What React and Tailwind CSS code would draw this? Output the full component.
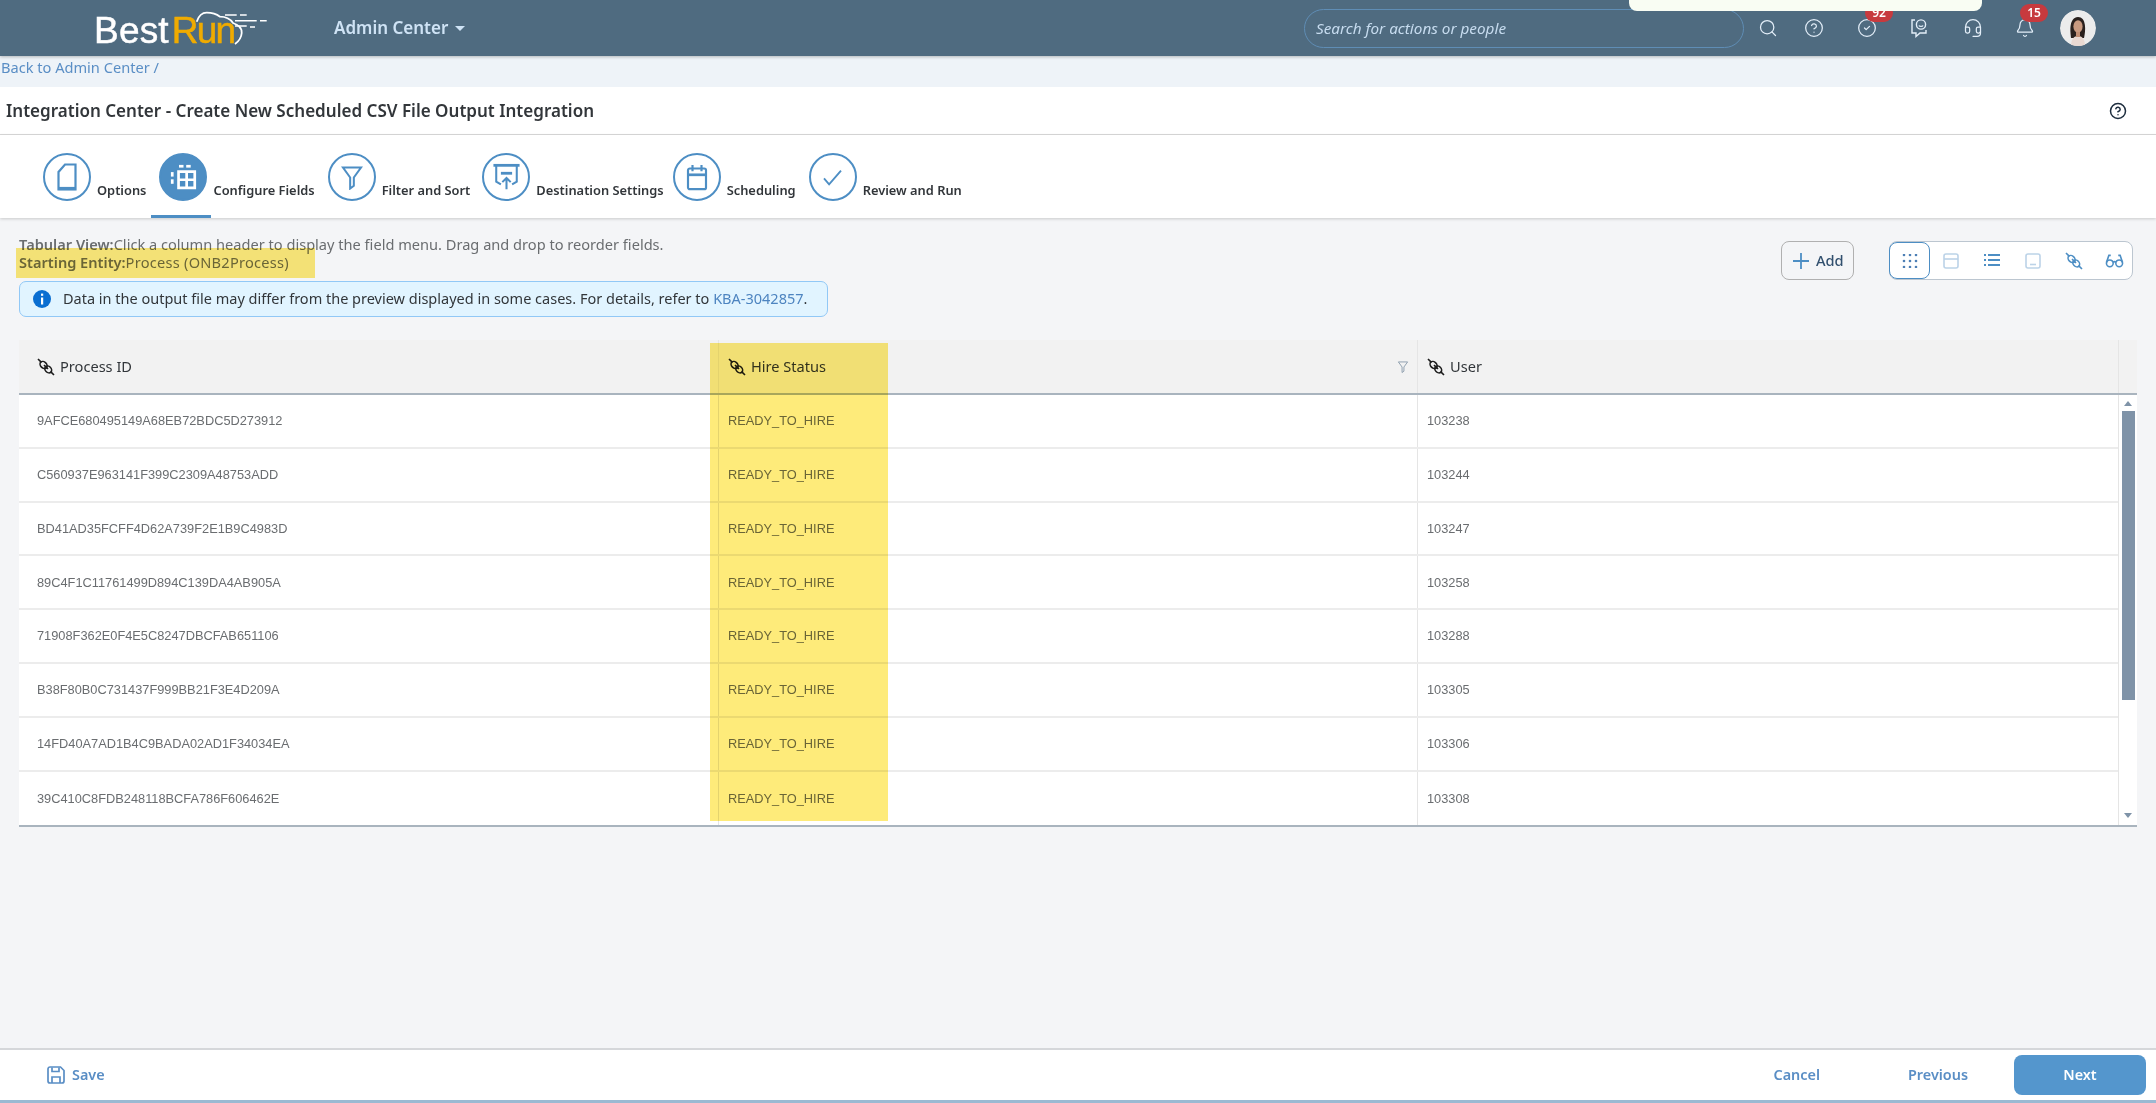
import { Search, CircleHelp, CircleCheck, Headset, Bell } from 'lucide-react'

const rows = [
  ['9AFCE680495149A68EB72BDC5D273912', '103238'],
  ['C560937E963141F399C2309A48753ADD', '103244'],
  ['BD41AD35FCFF4D62A739F2E1B9C4983D', '103247'],
  ['89C4F1C11761499D894C139DA4AB905A', '103258'],
  ['71908F362E0F4E5C8247DBCFAB651106', '103288'],
  ['B38F80B0C731437F999BB21F3E4D209A', '103305'],
  ['14FD40A7AD1B4C9BADA02AD1F34034EA', '103306'],
  ['39C410C8FDB248118BCFA786F606462E', '103308'],
]

// SAP style "association" icon: a diagonal strike through two chain links
function LinkIcon({ className }) {
  return (
    <svg viewBox="0 0 18 18" className={className} fill="none" stroke="currentColor" strokeWidth="1.6">
      <path d="M1 1l3.4 3.4M13.6 13.6L17 17M7 7l4 4" />
      <ellipse cx="6.6" cy="7" rx="3" ry="4" transform="rotate(-45 6.6 7)" />
      <ellipse cx="11.2" cy="11.4" rx="3" ry="3.8" transform="rotate(-45 11.2 11.4)" />
    </svg>
  )
}

function DocIcon() {
  return (
    <svg viewBox="0 0 20 28" className="w-[20px] h-[28px]" fill="none" stroke="#4d8ec4" strokeWidth="2.2">
      <path d="M8 1.5h10.5v25H1.5V9z" />
      <path d="M1.5 25.5h17" strokeWidth="3.2" />
    </svg>
  )
}

function GridIcon() {
  return (
    <svg viewBox="0 0 30 30" className="w-[27px] h-[27px]" fill="white">
      <rect x="10" y="1" width="5" height="3" />
      <rect x="18" y="1" width="5" height="3" />
      <rect x="1" y="9" width="3" height="5" />
      <rect x="1" y="17" width="3" height="5" />
      <path d="M8 7h21v21H8zM11 10v6h6v-6zM20 10v6h6v-6zM11 19v6h6v-6zM20 19v6h6v-6z" fillRule="evenodd" />
    </svg>
  )
}

function FunnelIcon({ className = 'w-[22px] h-[25px]', width = '2.2', color = '#4d8ec4' }) {
  return (
    <svg viewBox="0 0 24 26" className={className} fill="none" stroke={color} strokeWidth={width}>
      <path d="M2 2h20l-8 11v9l-4 3V13z" />
    </svg>
  )
}

function UploadIcon() {
  return (
    <svg viewBox="0 0 30 30" className="w-[29px] h-[28px]" fill="none" stroke="#4d8ec4" strokeWidth="2.2">
      <path d="M1 2.5h28" strokeWidth="3" />
      <path d="M4 3v17l5 3M26 3v17l-5 3" />
      <path d="M9 11h12" strokeWidth="3" />
      <path d="M15 28V16M10.5 20.5L15 16l4.5 4.5" />
    </svg>
  )
}

function CalendarIcon() {
  return (
    <svg viewBox="0 0 24 30" className="w-[22px] h-[27px]" fill="none" stroke="#4d8ec4" strokeWidth="2.4">
      <rect x="2" y="5" width="20" height="23" rx="2" />
      <path d="M2 12h20" strokeWidth="3" />
      <path d="M7 1v7M17 1v7" />
    </svg>
  )
}

function TickIcon() {
  return (
    <svg viewBox="0 0 24 20" className="w-[21px] h-[17px]" fill="none" stroke="#4d8ec4" strokeWidth="2.2">
      <path d="M2 11l6 7L22 2" />
    </svg>
  )
}

function Step({ icon, label, active, circleMargin }) {
  return (
    <div className={`flex items-start ${circleMargin}`}>
      <div
        className={`w-[48px] h-[48px] rounded-full border-2 border-[#4d8ec4] flex items-center justify-center shrink-0 ${
          active ? 'bg-[#4d8ec4]' : 'bg-white'
        }`}
      >
        {icon}
      </div>
      <span className="ml-[6px] mt-[27px] text-[12.85px] leading-[20px] font-semibold text-[#32363a] whitespace-nowrap">{label}</span>
    </div>
  )
}

function Logo() {
  return (
    <div className="relative ml-[94px] w-[174px] h-[56px] shrink-0">
      <span className="absolute left-0 top-[11px] text-[37px] leading-[40px] tracking-[0.2px] text-white [-webkit-text-stroke:0.5px_white] font-['Liberation_Sans',sans-serif]">
        Best<span className="text-[#f0ab00] [-webkit-text-stroke:0.5px_#f0ab00] tracking-[-1.8px] ml-[3px]">Run</span>
      </span>
      <svg viewBox="0 0 80 40" className="absolute left-[96px] top-[8px] w-[80px] h-[40px]" fill="none" stroke="white" strokeWidth="1.8">
        <path d="M6.7 13.7C9 7 13 4.7 16.7 4.7c5 0 10 1.5 13.3 4 5 0 10 2 13 6.3 6 2 9 6 8.7 10-.3 4-2.5 8-6.7 11" />
        <path d="M35 7h11.7M50 7h6.7M45 12.7h21.7M70 12.7h6.7M45 18h11.7M60 19h5" strokeWidth="1.6" />
      </svg>
    </div>
  )
}

function Avatar() {
  return (
    <svg viewBox="0 0 36 36" className="w-[36px] h-[36px] ml-[25px] rounded-full shrink-0">
      <circle cx="18" cy="18" r="18" fill="#ececec" />
      <path d="M11 28c-1-8-2-20 7-21 8 0 8 12 6 21z" fill="#2a211e" />
      <ellipse cx="18" cy="16.5" rx="4.6" ry="6.2" fill="#c99a80" />
      <path d="M11 36c0-7 3-10 7-10s7 3 7 10z" fill="#e9d9d2" />
      <path d="M16 22h4v5h-4z" fill="#c08e74" />
    </svg>
  )
}

function ToolIcon({ children, active }) {
  return (
    <div
      className={`w-[41px] h-full flex items-center justify-center shrink-0 ${
        active ? 'border border-[#4d8ec4] rounded-[8px] -my-px -ml-px h-[39px] bg-white' : ''
      }`}
    >
      {children}
    </div>
  )
}

export default function App() {
  return (
    <div className="relative w-[2156px] h-[1103px] overflow-hidden flex flex-col bg-[#f4f5f7] font-['Noto_Sans',sans-serif]">
      {/* popup that hangs in from the top of the page */}
      <div className="absolute left-[1629px] top-0 w-[353px] h-[11px] bg-[#f9fdf3] rounded-b-[8px] z-20" />

      {/* Shell bar */}
      <header className="h-[56px] shrink-0 flex items-center bg-[#4f6b80] shadow-[0_1px_3px_rgba(0,0,0,0.25)] relative z-10">
        <Logo />
        <div className="ml-[66px] flex items-center w-[137px] shrink-0">
          <span className="text-[17px] font-semibold text-[#cfe3f5] whitespace-nowrap">Admin Center</span>
          <span className="ml-[7px] w-0 h-0 border-x-[5px] border-x-transparent border-t-[5px] border-t-[#cfe3f5]" />
        </div>
        <div className="ml-[833px] w-[440px] h-[39px] shrink-0 rounded-full border border-[#5f8db5] flex items-center pl-[11px]">
          <span className="italic text-[15.3px] text-[#c7dcef]">Search for actions or people</span>
        </div>
        <Search className="w-[20px] h-[20px] ml-[14px] text-[#e3eef8] shrink-0" strokeWidth={1.5} />
        <CircleHelp className="w-[20px] h-[20px] ml-[26px] text-[#e3eef8] shrink-0" strokeWidth={1.5} />
        <div className="relative ml-[33px] shrink-0">
          <CircleCheck className="w-[20px] h-[20px] text-[#e3eef8]" strokeWidth={1.5} />
          <span className="absolute -top-[14px] left-[8px] w-[28px] h-[18px] rounded-full bg-[#c73a3e] text-white text-[12px] leading-[18px] font-semibold text-center">92</span>
        </div>
        <svg viewBox="0 0 20 20" className="w-[20px] h-[20px] ml-[32px] shrink-0" fill="none" stroke="#e3eef8" strokeWidth="1.4">
          <path d="M6 2H3v13h4v3.5l4-3.5h6v-3" />
          <circle cx="12" cy="6.5" r="4.6" />
          <path d="M10 7.5c.6 1.2 3.4 1.2 4 0" />
        </svg>
        <Headset className="w-[20px] h-[20px] ml-[34px] text-[#e3eef8] shrink-0" strokeWidth={1.5} />
        <div className="relative ml-[32px] shrink-0">
          <Bell className="w-[20px] h-[20px] text-[#e3eef8]" strokeWidth={1.5} />
          <span className="absolute -top-[14px] left-[5px] w-[28px] h-[18px] rounded-full bg-[#c73a3e] text-white text-[12px] leading-[18px] font-semibold text-center">15</span>
        </div>
        <Avatar />
      </header>

      {/* Breadcrumb */}
      <div className="h-[31px] shrink-0 bg-[#eef3f8] pl-[1px] pt-[1px] text-[14.6px] leading-[20px] text-[#5a8ec5]">
        Back to Admin Center /
      </div>

      {/* Title */}
      <div className="h-[48px] shrink-0 bg-white border-b border-[#d9d9d9] flex items-center justify-between pl-[6px] pr-[29px]">
        <h1 className="text-[17.05px] font-semibold text-[#32363a]">Integration Center - Create New Scheduled CSV File Output Integration</h1>
        <CircleHelp className="w-[18px] h-[18px] text-[#1d2d3e]" strokeWidth={2} />
      </div>

      {/* Wizard steps */}
      <nav className="relative h-[83px] shrink-0 bg-white shadow-[0_1px_3px_rgba(0,0,0,0.18)] flex items-start pt-[18px] pl-[43px]">
        <Step icon={<DocIcon />} label="Options" />
        <Step icon={<GridIcon />} label="Configure Fields" active circleMargin="ml-[13px]" />
        <Step icon={<FunnelIcon />} label="Filter and Sort" circleMargin="ml-[13px]" />
        <Step icon={<UploadIcon />} label="Destination Settings" circleMargin="ml-[12px]" />
        <Step icon={<CalendarIcon />} label="Scheduling" circleMargin="ml-[9px]" />
        <Step icon={<TickIcon />} label="Review and Run" circleMargin="ml-[13px]" />
        <div className="absolute left-[151px] bottom-0 w-[60px] h-[3px] bg-[#4d8ec4]" />
      </nav>

      {/* Content */}
      <main className="relative flex-1 min-h-0 flex flex-col">
        <div className="flex justify-between items-start pl-[19px] pr-[23px]">
          <div className="pt-[17px]">
            <p className="text-[14.6px] leading-[18px] text-[#6a6d70]"><b className="font-semibold">Tabular View:</b>Click a column header to display the field menu. Drag and drop to reorder fields.</p>
            <p className="text-[14.6px] leading-[18px] text-[#6a6d70]"><b className="font-semibold">Starting Entity:</b><span className="tracking-[0.25px]">Process (ONB2Process)</span></p>
            <div className="mt-[10px] w-[809px] h-[36px] flex items-center bg-[#e1f4ff] border border-[#91c8f6] rounded-[7px] pl-[13px] text-[14.5px] text-[#32363a]">
              <svg viewBox="0 0 18 18" className="w-[18px] h-[18px] shrink-0">
                <circle cx="9" cy="9" r="9" fill="#0a6ed1" />
                <rect x="8" y="7.5" width="2.2" height="7" fill="white" />
                <rect x="8" y="3.6" width="2.2" height="2.2" fill="white" />
              </svg>
              <span className="ml-[12px]">Data in the output file may differ from the preview displayed in some cases. For details, refer to <span className="text-[#4d84c0]">KBA-3042857</span>.</span>
            </div>
          </div>
          <div className="flex items-center pt-[23px]">
            <button className="w-[73px] h-[39px] rounded-[8px] border border-[#b0b0b0] flex items-center pl-[11px] text-[14.6px] font-medium text-[#32506e]">
              <svg viewBox="0 0 16 16" className="w-[16px] h-[16px] mr-[7px]" fill="none" stroke="#4d8ec4" strokeWidth="1.8">
                <path d="M8 0v16M0 8h16" />
              </svg>
              Add
            </button>
            <div className="ml-[35px] w-[244px] h-[39px] flex items-center bg-white border border-[#bcc6d0] rounded-[8px]">
              <ToolIcon active>
                <svg viewBox="0 0 16 14" className="w-[16px] h-[14px]" fill="#4d7fb5">
                  {[1, 7, 13].map((y) => [2, 8, 14].map((x) => <circle key={`${x}-${y}`} cx={x} cy={y} r="1.3" />))}
                </svg>
              </ToolIcon>
              <ToolIcon>
                <svg viewBox="0 0 16 16" className="w-[16px] h-[16px]" fill="none" stroke="#bcd3e8" strokeWidth="1.6">
                  <rect x="1" y="1" width="14" height="14" rx="2" />
                  <path d="M1 6h14" />
                </svg>
              </ToolIcon>
              <ToolIcon>
                <svg viewBox="0 0 16 16" className="w-[16px] h-[16px]" fill="#4d8ec4">
                  {[1, 6, 11].map((y) => (
                    <g key={y}>
                      <rect x="0" y={y} width="2" height="2" />
                      <rect x="4" y={y} width="12" height="2" />
                    </g>
                  ))}
                </svg>
              </ToolIcon>
              <ToolIcon>
                <svg viewBox="0 0 16 16" className="w-[16px] h-[16px]" fill="none" stroke="#bcd3e8" strokeWidth="1.6">
                  <rect x="1" y="1" width="14" height="14" rx="2" />
                  <path d="M5 11.5h6" />
                </svg>
              </ToolIcon>
              <ToolIcon>
                <LinkIcon className="w-[18px] h-[18px] text-[#4d8ec4]" />
              </ToolIcon>
              <ToolIcon>
                <svg viewBox="0 0 20 16" className="w-[19px] h-[15px]" fill="none" stroke="#4d8ec4" strokeWidth="1.7">
                  <circle cx="5" cy="11" r="3.6" />
                  <circle cx="15" cy="11" r="3.6" />
                  <path d="M8.5 10c1-1 2-1 3 0M1.5 10L4 2.5h2M18.5 10L16 2.5h-2" />
                </svg>
              </ToolIcon>
            </div>
          </div>
        </div>

        {/* Table */}
        <div className="mt-[23px] ml-[19px] w-[2118px] font-['Liberation_Sans',sans-serif]">
          <div className="flex h-[55px] bg-[#f2f2f2] border-b-2 border-[#a9b4be] text-[14.6px] text-[#32363a] font-['Noto_Sans',sans-serif]">
            <div className="w-[700px] pl-[18px] flex items-center border-r border-[#e5e5e5]">
              <LinkIcon className="w-[18px] h-[18px] text-[#1d1d1d] mr-[5px]" />Process ID
            </div>
            <div className="w-[699px] pl-[9px] pr-[8px] flex items-center border-r border-[#e5e5e5]">
              <LinkIcon className="w-[18px] h-[18px] text-[#1d1d1d] mr-[5px]" />Hire Status
              <span className="ml-auto"><FunnelIcon className="w-[12px] h-[12px]" width="2" color="#8a9bab" /></span>
            </div>
            <div className="w-[701px] pl-[9px] flex items-center border-r border-[#e5e5e5]">
              <LinkIcon className="w-[18px] h-[18px] text-[#1d1d1d] mr-[5px]" />User
            </div>
          </div>
          <div className="flex bg-white border-b-2 border-[#a9b4be]">
            <div className="w-[2100px] shrink-0 border-r border-[#e5e5e5]">
              {rows.map(([id, user], i) => (
                <div key={id} className={`flex h-[53.8px] text-[12.8px] text-[#6a6d70] ${i < rows.length - 1 ? 'border-b-2 border-[#ececec]' : ''}`}>
                  <div className="w-[700px] pl-[18px] flex items-center border-r border-[#e5e5e5]">{id}</div>
                  <div className="w-[699px] pl-[9px] flex items-center border-r border-[#e5e5e5]">READY_TO_HIRE</div>
                  <div className="flex-1 pl-[9px] flex items-center">{user}</div>
                </div>
              ))}
            </div>
            <div className="w-[18px] flex flex-col items-center pt-[6px] pb-[7px]">
              <span className="w-0 h-0 border-x-[4px] border-x-transparent border-b-[5px] border-b-[#7f93a8]" />
              <div className="mt-[5px] w-[13px] h-[289px] bg-[#7f93a8]" />
              <span className="mt-auto w-0 h-0 border-x-[4px] border-x-transparent border-t-[5px] border-t-[#7f93a8]" />
            </div>
          </div>
        </div>

        {/* Yellow marker highlights drawn over the screenshot */}
        <div className="absolute left-[16px] top-[30px] w-[299px] h-[30px] bg-[#feeb7a] mix-blend-multiply" />
        <div className="absolute left-[710px] top-[125px] w-[178px] h-[478px] bg-[#feeb7a] mix-blend-multiply" />
      </main>

      {/* Footer */}
      <footer className="h-[55px] shrink-0 flex items-center justify-between bg-white border-t-2 border-t-[#d5d7da] border-b-[3px] border-b-[#9bb9d2] pl-[47px] pr-[10px] text-[14.4px] font-semibold text-[#5a8ec5]">
        <div className="flex items-center">
          <svg viewBox="0 0 18 18" className="w-[18px] h-[18px]" fill="none" stroke="#5a8ec5" strokeWidth="1.7">
            <path d="M1 3a2 2 0 012-2h10.5L17 4.5V15a2 2 0 01-2 2H3a2 2 0 01-2-2z" />
            <path d="M5 1.5v4h7v-4M5 17v-6h8v6" />
          </svg>
          <span className="ml-[7px]">Save</span>
        </div>
        <div className="flex items-center">
          <span>Cancel</span>
          <span className="ml-[88px]">Previous</span>
          <button className="ml-[46px] w-[132px] h-[40px] rounded-[8px] bg-[#5496cd] text-white font-semibold">Next</button>
        </div>
      </footer>
    </div>
  )
}
